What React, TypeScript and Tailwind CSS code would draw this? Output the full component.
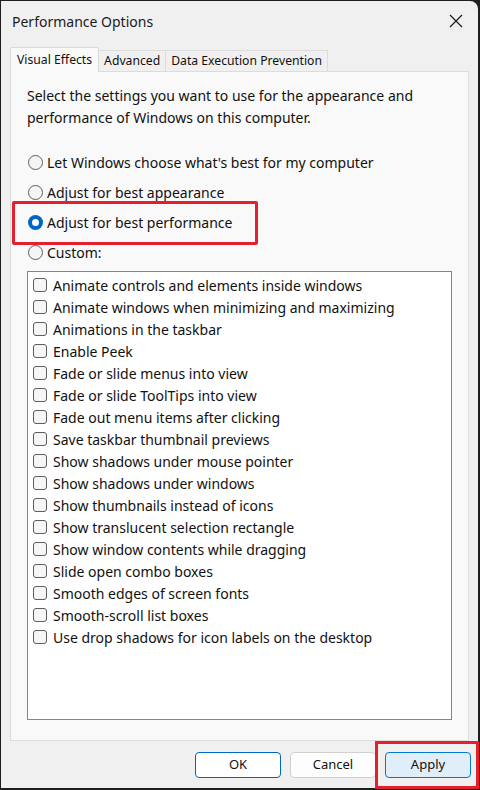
import React from 'react';

const effects = [
  'Animate controls and elements inside windows',
  'Animate windows when minimizing and maximizing',
  'Animations in the taskbar',
  'Enable Peek',
  'Fade or slide menus into view',
  'Fade or slide ToolTips into view',
  'Fade out menu items after clicking',
  'Save taskbar thumbnail previews',
  'Show shadows under mouse pointer',
  'Show shadows under windows',
  'Show thumbnails instead of icons',
  'Show translucent selection rectangle',
  'Show window contents while dragging',
  'Slide open combo boxes',
  'Smooth edges of screen fonts',
  'Smooth-scroll list boxes',
  'Use drop shadows for icon labels on the desktop',
];

const radios = [
  "Let Windows choose what's best for my computer",
  'Adjust for best appearance',
  'Adjust for best performance',
  'Custom:',
];

const Radio: React.FC<{ checked?: boolean }> = ({ checked }) =>
  checked ? (
    <span className="w-[15px] h-[15px] rounded-full bg-[#0067c0] flex items-center justify-center shrink-0">
      <span className="w-[7px] h-[7px] rounded-full bg-white" />
    </span>
  ) : (
    <span className="w-[15px] h-[15px] rounded-full border border-[#5d5d5d] bg-[#f5f5f5] shrink-0" />
  );

const App: React.FC = () => {
  return (
    <div
      className="w-[480px] h-[790px] bg-[#1e1e1e] pl-[1px] pr-[2px] pb-[2px] pt-[1px] text-[#111]"
      style={{ fontFamily: '"Segoe UI", "Noto Sans", Roboto, sans-serif' }}
    >
      <div className="relative h-full bg-[#f0f0f0] rounded-tr-[8px] flex flex-col">
        {/* title bar */}
        <div className="h-[40px] flex items-center justify-between pl-[11px] pr-[15px] shrink-0">
          <span className="text-[14px] text-[#1b1b1b]">Performance Options</span>
          <svg width="14" height="14" viewBox="0 0 14 14" className="text-[#1b1b1b]">
            <path d="M1 1 L13 13 M13 1 L1 13" stroke="currentColor" strokeWidth="1.2" fill="none" />
          </svg>
        </div>

        {/* tabs */}
        <div className="flex items-end px-[9px] pt-[6px] shrink-0 relative z-10 -mb-px">
          <div className="h-[25px] px-[6px] flex items-center bg-[#f9f9f9] border border-b-0 border-[#d9d9d9] rounded-t-[2px] text-[12.2px]">
            Visual Effects
          </div>
          <div className="h-[21px] px-[5px] flex items-center bg-[#f0f0f0] border border-l-0 border-b-0 border-[#dcdcdc] text-[12.2px] mb-px">
            Advanced
          </div>
          <div className="h-[21px] px-[5px] flex items-center bg-[#f0f0f0] border border-l-0 border-b-0 border-[#dcdcdc] text-[12.2px] mb-px">
            Data Execution Prevention
          </div>
        </div>

        {/* panel */}
        <div className="mx-[9px] flex-1 bg-[#f9f9f9] border border-[#dcdcdc] flex flex-col min-h-0">
          <p className="pl-[16px] pt-[13px] text-[14px] leading-[22px] pr-4">
            Select the settings you want to use for the appearance and performance of Windows on this computer.
          </p>

          <div className="relative mt-[18px] pl-[17px] flex flex-col">
            {radios.map((r, i) => (
              <div key={r} className="h-[30px] flex items-center gap-[4px] text-[14px]">
                <Radio checked={i === 2} />
                <span>{r}</span>
              </div>
            ))}
            <div className="absolute left-[1px] top-[54px] w-[246px] h-[44px] border-[3px] border-[#e5202e] rounded-[2px]" />
          </div>

          <div className="mx-[16px] mt-[4px] mb-[20px] flex-1 bg-white border border-[#858585] pt-[2px]">
            {effects.map((e) => (
              <div key={e} className="h-[22px] flex items-center gap-[6px] pl-[5px] text-[14px]">
                <span className="w-[14px] h-[14px] rounded-[3px] border border-[#5d5d5d] bg-[#f6f6f6] shrink-0" />
                <span>{e}</span>
              </div>
            ))}
          </div>
        </div>

        {/* buttons */}
        <div className="h-[47px] flex items-center justify-end gap-[9px] pr-[7px] shrink-0">
          <button className="w-[86px] h-[26px] rounded-[4px] bg-white border border-[#0067c0] text-[13px]">OK</button>
          <button className="w-[86px] h-[26px] rounded-[4px] bg-[#fdfdfd] border border-[#d0d0d0] text-[13px]">Cancel</button>
          <button className="w-[86px] h-[26px] rounded-[4px] bg-[#e0eef9] border border-[#0078d4] text-[13px]">Apply</button>
        </div>

        <div className="absolute left-[374px] top-[740px] w-[104px] h-[48px] border-[3px] border-[#e5202e]" />
      </div>
    </div>
  );
};

export default App;
